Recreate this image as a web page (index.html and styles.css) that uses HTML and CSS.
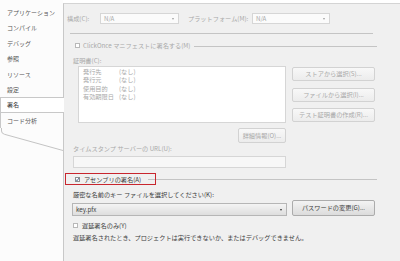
FILE: index.html
```html
<!DOCTYPE html>
<html lang="ja">
<head>
    <meta charset="UTF-8">
    <meta name="viewport" content="width=device-width, initial-scale=1.0">
    <title>署名 - プロジェクト プロパティ</title>
    <link rel="stylesheet" href="styles.css">
</head>
<body>
    <div class="designer">
        <!-- Tab Navigation -->
        <nav class="tab-list">
            <div class="tab">アプリケーション</div>
            <div class="tab">コンパイル</div>
            <div class="tab">デバッグ</div>
            <div class="tab">参照</div>
            <div class="tab">リソース</div>
            <div class="tab">設定</div>
            <div class="tab active">署名</div>
            <div class="tab last">コード分析</div>
            <svg class="tab-tail" width="64" height="24" viewBox="0 0 64 24">
                <path d="M1.5 0 V3 Q1.5 5.5 4.5 6.3 L63 22.5" fill="none" stroke="#c4c4c4" stroke-width="1"/>
            </svg>
        </nav>

        <!-- Signing Page -->
        <main class="page">
            <div class="config-row">
                <span class="config-label">構成(C):</span>
                <div class="combo config-combo"><span>N/A</span><i class="combo-arrow"></i></div>
                <span class="platform-label">プラットフォーム(M):</span>
                <div class="combo platform-combo"><span>N/A</span><i class="combo-arrow"></i></div>
            </div>
            <div class="rule"></div>

            <div class="page-body">
                <!-- ClickOnce -->
                <div class="group-title clickonce">
                    <span class="checkbox"></span>
                    <span>ClickOnce マニフェストに署名する(M)</span>
                    <span class="group-line"></span>
                </div>

                <div class="field-label cert-label">証明書(C):</div>
                <div class="cert-row">
                    <div class="cert-box">
                        <span>発行先</span><span>(なし)</span>
                        <span>発行元</span><span>(なし)</span>
                        <span>使用目的</span><span>(なし)</span>
                        <span>有効期限日</span><span>(なし)</span>
                    </div>
                    <div class="cert-actions">
                        <div class="btn">ストアから選択(S)...</div>
                        <div class="btn">ファイルから選択(I)...</div>
                        <div class="btn">テスト証明書の作成(R)...</div>
                    </div>
                </div>
                <div class="details-row">
                    <div class="btn details-btn">詳細情報(O)...</div>
                </div>

                <div class="field-label stamp-label">タイムスタンプ サーバーの URL(U):</div>
                <div class="text-input"></div>

                <!-- Assembly Signing -->
                <div class="group-title assembly">
                    <span class="checkbox checked">
                        <svg width="5" height="5" viewBox="0 0 5 5">
                            <path d="M1 2.6 L2 3.8 L4 1" fill="none" stroke="#3d5a8a" stroke-width="0.9"/>
                        </svg>
                    </span>
                    <span>アセンブリの署名(A)</span>
                    <span class="group-line"></span>
                    <span class="highlight"></span>
                </div>

                <div class="field-label enabled key-label">厳密な名前のキー ファイルを選択してください(K):</div>
                <div class="key-row">
                    <div class="combo key-combo"><span>key.pfx</span><i class="combo-arrow"></i></div>
                    <div class="btn enabled password-btn">パスワードの変更(G)...</div>
                </div>

                <div class="check-row delay">
                    <span class="checkbox"></span>
                    <span>遅延署名のみ(Y)</span>
                </div>
                <div class="field-label enabled note">遅延署名されたとき、プロジェクトは実行できないか、またはデバッグできません。</div>
            </div>
        </main>
    </div>
</body>
</html>
```

FILE: styles.css
```css
/* ----- Color Variables ----- */
:root {
    --page-background: #f0f0f0;
    --tab-background: #fcfcfc;
    --border-color: #c8c8c8;
    --light-border: #d6d6d6;
    --text-color: #3c3c3c;
    --disabled-text: #a9a9a9;
    --highlight-color: #c8262e;
}

/* ----- Global Reset ----- */
* {
    margin: 0;
    padding: 0;
    box-sizing: border-box;
    font-family: "Noto Sans CJK JP", "Noto Sans", sans-serif;
}

body {
    width: 400px;
    height: 261px;
    overflow: hidden;
    background: #ffffff;
    font-size: 6.2px;
    color: var(--disabled-text);
}

.designer {
    display: flex;
    height: 261px;
}

/* ----- Tab Navigation ----- */
.tab-list {
    width: 63px;
    flex-shrink: 0;
    padding-top: 5px;
    background: var(--tab-background);
}

.tab {
    height: 15.4px;
    line-height: 15.4px;
    padding-left: 7px;
    font-size: 6px;
    color: #555555;
    white-space: nowrap;
}

.tab.active {
    position: relative;
    z-index: 1;
    margin-right: -1px;
    border-top: 1px solid var(--border-color);
    border-bottom: 1px solid var(--border-color);
    border-left: 1px solid var(--border-color);
    padding-left: 6px;
    line-height: 13.4px;
    background: #ffffff;
    color: #333333;
}

.tab.last {
    border-left: 1px solid var(--border-color);
    padding-left: 6px;
}

.tab-tail {
    display: block;
}

/* ----- Page Layout ----- */
.page {
    flex: 1;
    margin-top: 3px;
    padding-top: 9px;
    background: var(--page-background);
    border-top: 1px solid #d4d4d4;
    border-left: 1px solid var(--border-color);
}

.config-row {
    display: flex;
    align-items: center;
    height: 11px;
    padding-left: 3px;
    white-space: nowrap;
}

.config-label {
    width: 33px;
}

.platform-label {
    width: 64px;
    margin-left: 9px;
}

.config-combo {
    width: 79px;
}

.platform-combo {
    width: 78px;
}

.rule {
    height: 1px;
    margin: 9px 27px 0 6px;
    background: #c4c4c4;
}

.page-body {
    padding: 0 25px 0 9px;
}

/* ----- Form Elements ----- */
.combo {
    display: flex;
    align-items: center;
    height: 11px;
    padding: 0 4px 0 3px;
    border: 1px solid var(--light-border);
    background: #fbfbfb;
}

.combo span {
    flex: 1;
}

.combo-arrow {
    width: 0;
    height: 0;
    border-left: 1.5px solid transparent;
    border-right: 1.5px solid transparent;
    border-top: 2px solid #a0a0a0;
}

.field-label {
    height: 9px;
    line-height: 9px;
    white-space: nowrap;
}

.field-label.enabled {
    color: var(--text-color);
}

.checkbox {
    display: inline-block;
    width: 5px;
    height: 5px;
    flex-shrink: 0;
    border: 1px solid #b8b8b8;
    background: #ffffff;
}

.checkbox.checked {
    border-color: #8e8f8f;
}

.checkbox svg {
    display: block;
    margin: -1px;
}

.group-title {
    position: relative;
    display: flex;
    align-items: center;
    height: 9px;
    padding-left: 2px;
    white-space: nowrap;
}

.group-title .checkbox {
    margin-right: 3px;
}

.group-line {
    flex: 1;
    height: 1px;
    margin: 1px -2px 0 4px;
    background: #c4c4c4;
}

.clickonce {
    margin-top: 7px;
}

.cert-label {
    margin-top: 6px;
}

.cert-row {
    display: flex;
    margin-top: 1px;
}

.cert-box {
    display: grid;
    grid-template-columns: 36px 1fr;
    grid-auto-rows: 8.5px;
    align-content: start;
    width: 208px;
    height: 57px;
    margin-left: 5px;
    padding: 0.5px 0 0 4px;
    line-height: 8.5px;
    border: 1px solid var(--light-border);
    background: #ffffff;
    white-space: nowrap;
}

.cert-actions {
    display: flex;
    flex-direction: column;
    width: 83px;
    margin-left: 6px;
}

.btn {
    height: 14px;
    line-height: 12px;
    text-align: center;
    white-space: nowrap;
    border: 1px solid #d2d2d2;
    border-radius: 2px;
    background: linear-gradient(#f8f8f8, #ececec);
}

.cert-actions .btn:nth-child(1) {
    margin-top: 1px;
}

.cert-actions .btn:nth-child(2) {
    margin-top: 7px;
}

.cert-actions .btn:nth-child(3) {
    margin-top: 6px;
}

.details-row {
    display: flex;
    justify-content: flex-end;
    margin: 5px 89px 0 0;
}

.details-btn {
    width: 48px;
    height: 15px;
    line-height: 13px;
}

.stamp-label {
    margin-top: 1px;
}

.text-input {
    height: 12px;
    margin: 3px 89px 0 0;
    border: 1px solid var(--light-border);
    background: #f7f7f7;
}

/* ----- Assembly Signing ----- */
.assembly {
    height: 10px;
    margin-top: 6px;
    color: var(--text-color);
}

.assembly .checkbox {
    margin-right: 4px;
}

.assembly .group-line {
    margin-left: 7px;
}

.highlight {
    position: absolute;
    left: -8px;
    top: -1px;
    width: 91px;
    height: 12px;
    border: 1px solid var(--highlight-color);
}

.key-label {
    margin-top: 6px;
}

.key-row {
    display: flex;
    align-items: flex-end;
    margin-top: 1px;
}

.key-combo {
    width: 215px;
    height: 13px;
    margin-left: -1px;
    border-color: #b6b6b6;
    background: linear-gradient(#f4f4f4, #dedede);
    color: var(--text-color);
}

.key-combo .combo-arrow {
    border-top-color: #333333;
}

.password-btn {
    width: 83px;
    height: 16px;
    line-height: 14px;
    margin-left: 5px;
}

.btn.enabled {
    border-color: #acacac;
    background: linear-gradient(#f3f3f3, #dcdcdc);
    color: var(--text-color);
}

.check-row {
    display: flex;
    align-items: center;
    height: 9px;
    color: var(--text-color);
    white-space: nowrap;
}

.delay {
    margin-top: 5px;
}

.delay .checkbox {
    margin-right: 4px;
}

.note {
    margin-top: 3px;
}
```
